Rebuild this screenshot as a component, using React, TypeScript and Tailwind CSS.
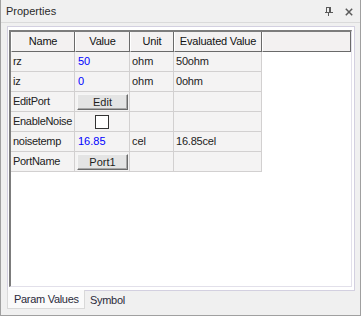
import React from "react";

const FONT = { fontFamily: '"Liberation Sans", Arial, sans-serif' };

type Row = { name: string; value?: string; kind: "text" | "button" | "check"; unit?: string; evalv?: string };

const rows: Row[] = [
  { name: "rz", value: "50", kind: "text", unit: "ohm", evalv: "50ohm" },
  { name: "iz", value: "0", kind: "text", unit: "ohm", evalv: "0ohm" },
  { name: "EditPort", value: "Edit", kind: "button" },
  { name: "EnableNoise", kind: "check" },
  { name: "noisetemp", value: "16.85", kind: "text", unit: "cel", evalv: "16.85cel" },
  { name: "PortName", value: "Port1", kind: "button" },
];

function Btn({ label }: { label: string }) {
  return (
    <div className="ml-[2px] mt-[2px] w-[51px] h-[16px] flex items-center justify-center bg-[#e4e4e4] border border-t-[#f6f6f6] border-l-[#f6f6f6] border-r-[#6a6a6a] border-b-[#6a6a6a] shadow-[inset_-1px_-1px_0_#a8a8a8] text-[11px] leading-none text-[#1e1e1e]">
      {label}
    </div>
  );
}

function HeadCell({ w, label }: { w?: string; label?: string }) {
  return (
    <div
      className={`${w ?? "flex-1"} h-[20px] flex items-center justify-center bg-[#f3f1f1] border-l border-l-white border-r border-r-[#6a6a6a] border-b border-b-[#6a6a6a] text-[11px] text-[#111] tracking-[-0.2px]`}
    >
      {label}
    </div>
  );
}

export default function App() {
  const cell = "h-[20px] bg-[#f4f3f3] border-r border-b border-[#d2d0d0] flex text-[11px] leading-none";
  return (
    <div style={FONT} className="w-[361px] h-[316px] bg-[#f0f0f0] border-x border-b border-[#a0a0a0] flex flex-col">
      {/* Title bar */}
      <div className="h-[23px] shrink-0 flex items-center pl-[5px] pr-[7px] border-b border-[#dadada]">
        <span className="text-[11px] text-[#2b2b2b]">Properties</span>
        <div className="ml-auto flex items-center gap-[12px] pt-[1px]">
          <svg width="8" height="9" viewBox="0 0 8 9" shapeRendering="crispEdges">
            <rect x="1.5" y="0.5" width="4" height="4.5" fill="none" stroke="#5a5a5a" />
            <rect x="4" y="0" width="2" height="5" fill="#5a5a5a" />
            <rect x="0" y="5" width="8" height="1" fill="#5a5a5a" />
            <rect x="3" y="6" width="1" height="3" fill="#5a5a5a" />
          </svg>
          <svg width="8" height="8" viewBox="0 0 8 8">
            <path d="M0.8 0.8 L7.2 7.2 M7.2 0.8 L0.8 7.2" stroke="#5a5a5a" strokeWidth="1.5" />
          </svg>
        </div>
      </div>

      {/* Tab page */}
      <div className="pl-[6px] pr-[5px] pt-[3px] shrink-0">
        <div className="h-[265px] border border-[#d3d0e0] bg-white pl-[1px] pr-[2px] pt-[3px] pb-[3px] flex flex-col">
          <div className="flex-1 border-t-2 border-l-2 border-t-[#7c7c7c] border-l-[#7c7c7c] border-r border-b border-r-[#e2e0ea] border-b-[#e2e0ea] bg-white flex flex-col overflow-hidden">
            <div className="flex">
              <HeadCell w="w-[64px]" label="Name" />
              <HeadCell w="w-[55px]" label="Value" />
              <HeadCell w="w-[44px]" label="Unit" />
              <HeadCell w="w-[88px]" label="Evaluated Value" />
              <HeadCell />
            </div>
            {rows.map((r) => (
              <div key={r.name} className="flex">
                <div className={`${cell} w-[64px] items-center pl-[2px] text-[#222] tracking-[-0.3px]`}>{r.name}</div>
                <div className={`${cell} w-[55px] ${r.kind === "text" ? "items-center pl-[3px]" : r.kind === "check" ? "items-center justify-center" : "items-start"}`}>
                  {r.kind === "text" && <span className="text-[#0000ff]">{r.value}</span>}
                  {r.kind === "button" && <Btn label={r.value!} />}
                  {r.kind === "check" && <div className="w-[14px] h-[14px] border border-[#333] bg-white" />}
                </div>
                <div className={`${cell} w-[44px] items-center pl-[2px] text-[#222]`}>{r.unit}</div>
                <div className={`${cell} w-[88px] items-center pl-[2px] text-[#222] tracking-[-0.2px]`}>{r.evalv}</div>
              </div>
            ))}
          </div>
        </div>
      </div>

      {/* Tabs */}
      <div className="pl-[6px] flex items-start -mt-[1px]">
        <div className="h-[19px] w-[78px] bg-[#fafafa] border-x border-b border-[#d9d9d9] flex items-center pl-[6px] text-[11px] text-[#2a2a3a] tracking-[-0.3px]">
          Param Values
        </div>
        <div className="h-[19px] flex items-center pl-[5px] pt-[1px] text-[11px] text-[#2a2a3a] tracking-[-0.3px]">Symbol</div>
      </div>
    </div>
  );
}
